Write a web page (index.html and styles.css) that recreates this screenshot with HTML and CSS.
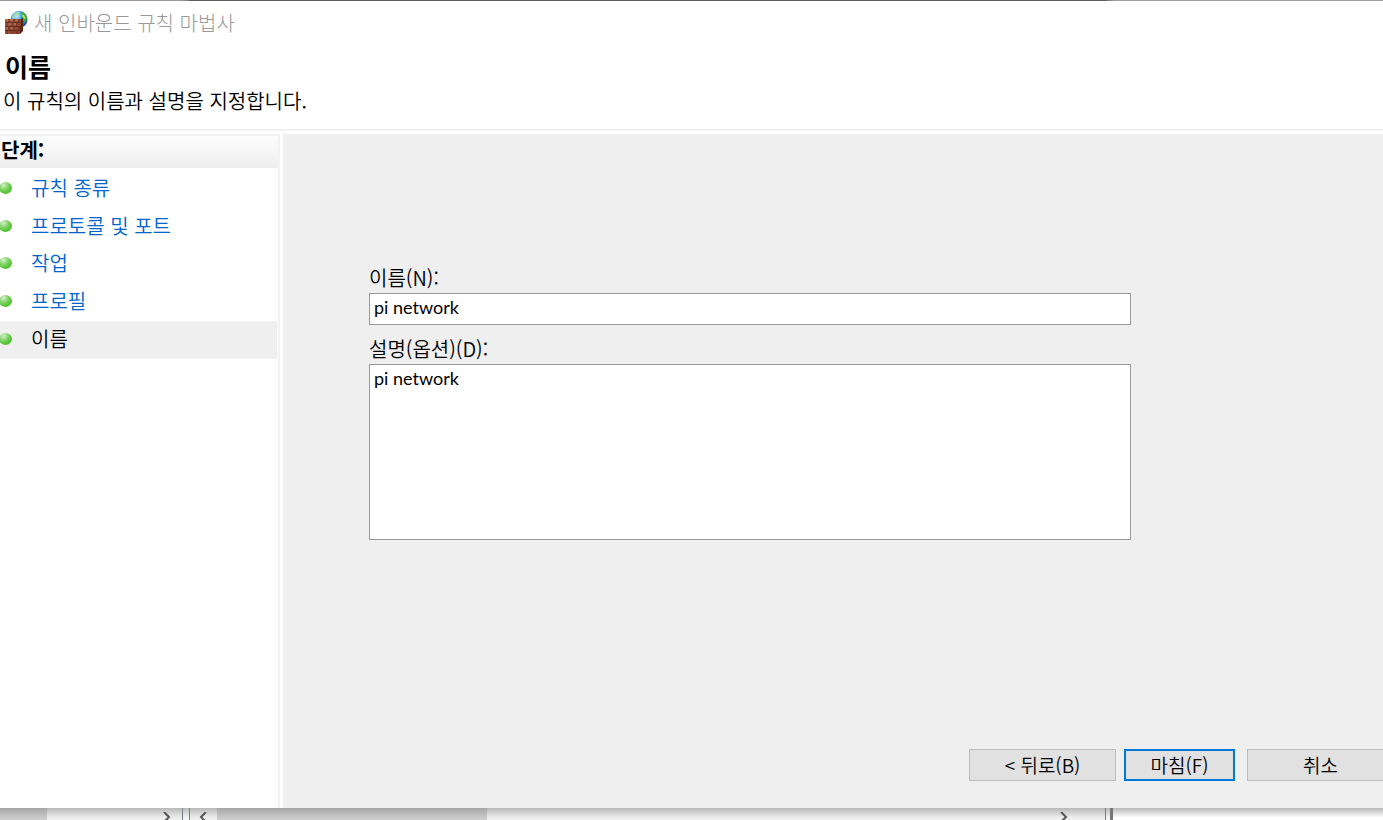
FILE: index.html
```html
<!DOCTYPE html>
<html lang="ko">
<head>
    <meta charset="UTF-8">
    <meta name="viewport" content="width=device-width, initial-scale=1.0">
    <title>새 인바운드 규칙 마법사</title>
    <link rel="stylesheet" href="styles.css">
</head>
<body>
    <div class="top-edge">
        <span class="edge-left"></span>
        <span class="edge-mark"></span>
        <span class="edge-middle"></span>
        <span class="edge-mark"></span>
        <span class="edge-right"></span>
    </div>
    <div class="wizard">
        <div class="titlebar">
            <svg class="app-icon" width="24" height="24" viewBox="0 0 24 24" aria-hidden="true">
                <defs>
                    <radialGradient id="globe" cx="0.35" cy="0.3" r="0.75">
                        <stop offset="0" stop-color="#c5efff"/>
                        <stop offset="0.4" stop-color="#4ba5ed"/>
                        <stop offset="1" stop-color="#123ca4"/>
                    </radialGradient>
                    <linearGradient id="brick" x1="0" y1="0" x2="1" y2="1">
                        <stop offset="0" stop-color="#b4644a"/>
                        <stop offset="1" stop-color="#873a28"/>
                    </linearGradient>
                </defs>
                <circle cx="14" cy="8.500" r="8.500" fill="url(#globe)"/>
                <path d="M9 3c2-2 4-2 6-2l-2 3-2 1-1 2-3 0z" fill="#a5dba9"/>
                <path d="M17 1c3 1 5 4 5 7l-2 4-2-3-2-2 1-3z" fill="#3caa36"/>
                <path d="M18 3l3 4-2 1-2-3z" fill="#a0e35d"/>
                <path d="M0 8h16v14l-1 1H0z" fill="url(#brick)"/>
                <path d="M16 8l2-1v13l-3 3z" fill="#562419"/>
                <path d="M0 11.500h16M0 15.500h16M0 19.500h16M4 8v3.500M9 8v3.500M14 8v3.500M2 11.500v4M7 11.500v4M12 11.500v4M4 15.500v4M9 15.500v4M14 15.500v4M2 19.500v3.500M7 19.500v3.500M12 19.500v3.500" stroke="#63301f" fill="none"/>
                <path d="M1 9h2M6 9h2M11 9h2M4 13h2M9 13h2M1 17h2M6 17h2" stroke="#c48065" fill="none"/>
            </svg>
            <span>새 인바운드 규칙 마법사</span>
        </div>
        <header class="header">
            <h1>이름</h1>
            <p>이 규칙의 이름과 설명을 지정합니다.</p>
        </header>
        <div class="content">
            <nav class="sidebar">
                <h2>단계:</h2>
                <ul class="steps">
                    <li><span class="dot"></span><a href="#">규칙 종류</a></li>
                    <li><span class="dot"></span><a href="#">프로토콜 및 포트</a></li>
                    <li><span class="dot"></span><a href="#">작업</a></li>
                    <li><span class="dot"></span><a href="#">프로필</a></li>
                    <li class="active"><span class="dot"></span><span>이름</span></li>
                </ul>
            </nav>
            <main class="main">
                <form class="fields">
                    <label for="name">이름(N):</label>
                    <input type="text" id="name" value="pi network">
                    <label for="description">설명(옵션)(D):</label>
                    <textarea id="description">pi network</textarea>
                </form>
                <div class="buttons">
                    <button type="button" class="wide">&lt; 뒤로(B)</button>
                    <button type="button" class="finish">마침(F)</button>
                    <button type="button" class="wide">취소</button>
                </div>
            </main>
        </div>
    </div>
    <!-- scrollbars of the window behind -->
    <div class="behind">
        <span class="thumb thumb-left"></span>
        <span class="track track-left"><svg width="8" height="10" viewBox="0 0 8 10"><path d="M1 0l5 5-5 5" /></svg></span>
        <span class="splitter"></span>
        <span class="track track-start"><svg width="8" height="10" viewBox="0 0 8 10"><path d="M7 0L2 5l5 5" /></svg></span>
        <span class="thumb thumb-middle"></span>
        <span class="track track-end"><svg width="8" height="10" viewBox="0 0 8 10"><path d="M1 0l5 5-5 5" /></svg></span>
        <span class="splitter splitter-dark"></span>
        <span class="blank"></span>
    </div>
</body>
</html>
```
FILE: styles.css
```css
* {
    box-sizing: border-box;
}
body {
    margin: 0;
    min-height: 100vh;
    display: flex;
    flex-direction: column;
    overflow: hidden;
    background: #fff;
    color: #000;
    font-family: "Noto Sans CJK KR", sans-serif;
    font-size: 20px;
    font-weight: 350;
    line-height: 24px;
}
.top-edge {
    display: flex;
    height: 1px;
    background: #5e5e5e;
}
.edge-left {
    width: 183px;
    background: #999;
}
.edge-mark {
    width: 6px;
    background: #858585;
}
.edge-middle {
    flex: 1;
}
.edge-right {
    width: 270px;
    background: #a3a3a3;
}
.wizard {
    flex: 1;
    display: flex;
    flex-direction: column;
    background: #fff;
}
.titlebar {
    display: flex;
    align-items: center;
    gap: 5px;
    height: 44px;
    padding-left: 5px;
    color: #999;
    font-weight: 300;
}
.header {
    height: 86px;
    padding: 5px 3px 0;
    border-bottom: 2px solid #f2f2f2;
}
.header h1 {
    margin: 0;
    padding-left: 2px;
    font-size: 25px;
    line-height: 32px;
}
.header p {
    margin: 7px 0 0;
}
.content {
    flex: 1;
    display: flex;
    gap: 3px;
    padding-top: 3px;
}
.sidebar {
    width: 280px;
    border-top: 2px solid #f2f2f2;
    border-right: 2px solid #f2f2f2;
}
.sidebar h2 {
    height: 32px;
    margin: 0 0 3px;
    padding-left: 1px;
    font-size: 20px;
    line-height: 27px;
    background: linear-gradient(#fdfdfd, #eee);
}
.steps {
    display: flex;
    flex-direction: column;
    height: 188px;
    margin: 0;
    padding: 0;
    list-style: none;
}
.steps li {
    flex: 1;
    display: flex;
    align-items: center;
    gap: 19px;
    margin-right: 1px;
    padding-bottom: 3px;
}
.steps .active {
    background: #efefef;
}
.steps a {
    color: #0066cc;
    text-decoration: none;
}
.dot {
    width: 13px;
    height: 12px;
    margin-left: -1px;
    border-radius: 50%;
    background: radial-gradient(circle at 35% 25%, #d5f2cd 0, #87d46d 35%, #50c52f 65%, #5ebf45 100%);
}
.main {
    flex: 1;
    display: flex;
    flex-direction: column;
    justify-content: space-between;
    overflow: hidden;
    background: #efefef;
}
.fields {
    display: flex;
    flex-direction: column;
    margin: 132px 252px 0 86px;
}
.fields label {
    margin-bottom: 3px;
}
.fields input, .fields textarea {
    display: block;
    width: 100%;
    margin: 0;
    border: 1px solid #999;
    border-radius: 0;
    background: #fff;
    color: #000;
    font-family: Lato, sans-serif;
    font-size: 18px;
    line-height: 24px;
    outline: none;
}
.fields input {
    height: 32px;
    margin-bottom: 12px;
    padding: 0 4px 4px;
}
.fields textarea {
    height: 176px;
    padding: 1px 4px;
    resize: none;
}
.buttons {
    display: flex;
    justify-content: flex-end;
    gap: 8px;
    margin: 0 -11px 27px 0;
}
.buttons button {
    height: 32px;
    padding: 0;
    border: 1px solid #bcbcbc;
    background: #e1e1e1;
    color: #000;
    font-family: "Noto Sans CJK KR", sans-serif;
    font-size: 19px;
    font-weight: 350;
    line-height: 24px;
}
.buttons .wide {
    width: 147px;
}
.buttons .finish {
    width: 111px;
    margin-right: 4px;
    border: 2px solid #0078d7;
}
.behind {
    display: flex;
    height: 12px;
    overflow: hidden;
    background: #fff;
}
.behind svg {
    display: block;
    margin-top: 4px;
    fill: none;
    stroke: #555;
    stroke-width: 2;
}
.thumb {
    background: linear-gradient(#a5a5a5, #cacaca 80%);
}
.track {
    display: flex;
    background: linear-gradient(#b8b8b8, #ededed 80%);
}
.thumb-left {
    width: 47px;
}
.track-left {
    width: 135px;
    justify-content: flex-end;
    padding-right: 11px;
}
.splitter {
    width: 8px;
    border: 1px solid #777c88;
    border-width: 0 1px;
    background: linear-gradient(#b8b8b8, #f4f4f4 80%);
}
.splitter-dark {
    border-right: 3px solid #777;
}
.track-start {
    width: 27px;
    padding-left: 9px;
}
.thumb-middle {
    width: 270px;
}
.track-end {
    flex: 1;
    justify-content: flex-end;
    padding-right: 37px;
}
.blank {
    width: 270px;
    background: linear-gradient(#b8b8b8, #fff 80%);
}
```
